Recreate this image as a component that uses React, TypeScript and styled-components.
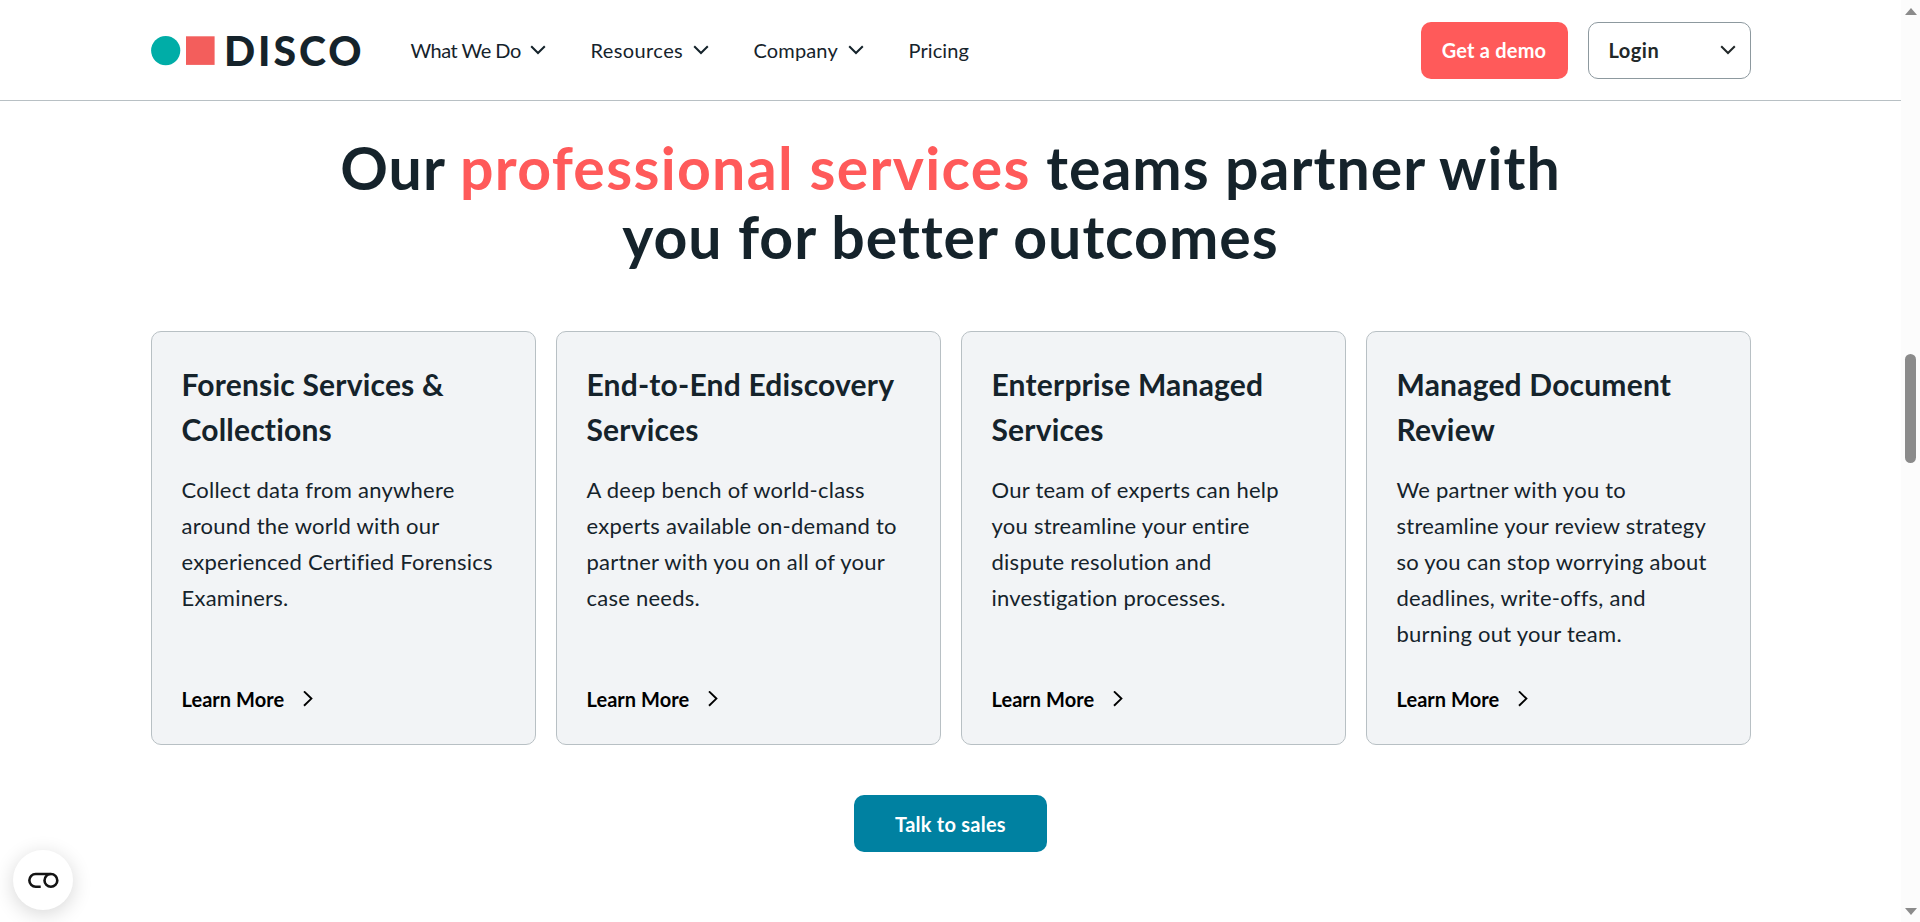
import type { FC } from 'react'
import styled, { createGlobalStyle } from 'styled-components'

const menu = [
	{ label: 'What We Do', dropdown: true, width: 109, spacing: -0.5 },
	{ label: 'Resources', dropdown: true, width: 92, spacing: 0.4 },
	{ label: 'Company', dropdown: true, width: 84, spacing: 0.15 },
	{ label: 'Pricing', dropdown: false, width: 60, spacing: 0.1 },
]

const services = [
	{
		title: 'Forensic Services & Collections',
		text: 'Collect data from anywhere around the world with our experienced Certified Forensics Examiners.',
	},
	{
		title: 'End-to-End Ediscovery Services',
		text: 'A deep bench of world-class experts available on-demand to partner with you on all of your case needs.',
	},
	{
		title: 'Enterprise Managed Services',
		text: 'Our team of experts can help you streamline your entire dispute resolution and investigation processes.',
	},
	{
		title: 'Managed Document Review',
		text: 'We partner with you to streamline your review strategy so you can stop worrying about deadlines, write-offs, and burning out your team.',
	},
]

const ChevronDown: FC = () => (
	<svg width="16" height="10" viewBox="0 0 16 10" fill="none">
		<path d="M1.2 1.2 8 8l6.8-6.8" stroke="currentColor" strokeWidth="2" />
	</svg>
)

const ChevronRight: FC = () => (
	<svg width="10" height="16" viewBox="0 0 10 16" fill="none">
		<path d="M1 .4 8.4 7.6 1 14.8" stroke="currentColor" strokeWidth="1.9" />
	</svg>
)

const Logo: FC = () => (
	<svg width="220" height="48" viewBox="0 0 220 48">
		<circle cx="14.7" cy="24.6" r="14.6" fill="#00ada7" />
		<rect x="35" y="10.3" width="28.6" height="28.6" fill="#f35e5c" />
		<LogoText x="73" y="39.6" textLength="137.5" lengthAdjust="spacing">
			DISCO
		</LogoText>
	</svg>
)

const App: FC = () => {
	return (
		<Window>
			<GlobalStyle />
			<Page>
				<Header>
					<Bar>
						<Logo />
						<Nav>
							{menu.map((item) => (
								<NavItem key={item.label}>
									<NavLabel $width={item.width} $spacing={item.spacing}>
										{item.label}
									</NavLabel>
									{item.dropdown && <ChevronDown />}
								</NavItem>
							))}
						</Nav>
						<Actions>
							<DemoButton>Get a demo</DemoButton>
							<LoginButton>
								Login
								<ChevronDown />
							</LoginButton>
						</Actions>
					</Bar>
				</Header>
				<Section>
					<Title>
						Our <Accent>professional services</Accent> teams partner with
						<br />
						you for better outcomes
					</Title>
					<Cards>
						{services.map((service) => (
							<Card key={service.title}>
								<CardTitle>{service.title}</CardTitle>
								<CardText>{service.text}</CardText>
								<LearnMore>
									Learn More
									<ChevronRight />
								</LearnMore>
							</Card>
						))}
					</Cards>
					<SalesButton>Talk to sales</SalesButton>
				</Section>
			</Page>
			<Scrollbar>
				<Arrow $up />
				<Thumb />
				<Arrow />
			</Scrollbar>
			<CookieButton aria-label="Cookie settings">
				<svg width="32" height="17" viewBox="0 0 32 17" fill="none" stroke="#141414" strokeWidth="2.6">
					<path d="M13.7 14.7H8.7a6.3 6.3 0 0 1 0-12.7H23.5" />
					<circle cx="23.9" cy="8.4" r="6.4" />
				</svg>
			</CookieButton>
		</Window>
	)
}

const GlobalStyle = createGlobalStyle`
	* {
		box-sizing: border-box;
	}

	body {
		margin: 0;
		background-color: #fff;
		font-family: Lato, 'Liberation Sans', sans-serif;
		color: #15232b;
	}

	button {
		font-family: inherit;
		cursor: pointer;
	}

	svg {
		flex: none;
	}
`

const Window = styled.div`
	display: grid;
	grid-template-columns: 1fr 19px;
	height: 100vh;
	overflow: hidden;
`

const Page = styled.div`
	min-width: 0;
`

const Header = styled.header`
	height: 101px;
	border-bottom: 1px solid #b8c0c4;
`

const Bar = styled.div`
	display: flex;
	align-items: center;
	width: 1600px;
	height: 100%;
	margin: 0 auto;
`

const LogoText = styled.text`
	font-family: Lato, sans-serif;
	font-size: 41px;
	font-weight: 900;
	fill: #15232b;
`

const Nav = styled.nav`
	display: flex;
	gap: 45px;
	margin-left: 40px;
`

const NavItem = styled.a`
	display: flex;
	align-items: center;
	gap: 10px;
	font-size: 20px;
	line-height: 30px;
`

const NavLabel = styled.span<{ $width: number; $spacing: number }>`
	width: ${(props) => props.$width}px;
	letter-spacing: ${(props) => props.$spacing}px;
	white-space: nowrap;
`

const Actions = styled.div`
	display: flex;
	gap: 20px;
	margin-left: auto;
`

const DemoButton = styled.button`
	width: 147px;
	height: 57px;
	padding: 0;
	border: none;
	border-radius: 10px;
	background-color: #ff5a5a;
	color: white;
	font-size: 20px;
	font-weight: 700;
	letter-spacing: 0.2px;
`

const LoginButton = styled.button`
	display: flex;
	align-items: center;
	justify-content: space-between;
	width: 163px;
	height: 57px;
	padding: 0 14px 0 20px;
	border: 1px solid #8d999f;
	border-radius: 10px;
	background-color: white;
	color: #222829;
	font-size: 20px;
	font-weight: 700;
	letter-spacing: 0.5px;
`

const Section = styled.section`
	display: flex;
	flex-direction: column;
	align-items: center;
	width: 1600px;
	margin: 0 auto;
	padding-top: 32px;
`

const Title = styled.h2`
	margin: 0 0 60px;
	font-size: 59px;
	font-weight: 700;
	line-height: 69px;
	letter-spacing: 1px;
	text-align: center;
`

const Accent = styled.span`
	color: #ff5a5a;
	letter-spacing: 1.3px;
`

const Cards = styled.div`
	display: grid;
	grid-template-columns: repeat(4, 1fr);
	gap: 20px;
	width: 100%;
`

const Card = styled.article`
	display: flex;
	flex-direction: column;
	height: 414px;
	padding: 30px;
	border: 1px solid #b8c0c4;
	border-radius: 10px;
	background-color: #f2f4f6;
`

const CardTitle = styled.h3`
	margin: 0 0 20px;
	font-size: 30px;
	font-weight: 700;
	line-height: 45px;
	letter-spacing: 0.2px;
`

const CardText = styled.p`
	margin: 0;
	font-size: 22px;
	line-height: 36px;
	letter-spacing: 0.25px;
`

const LearnMore = styled.a`
	display: flex;
	align-items: center;
	gap: 19px;
	margin-top: auto;
	color: black;
	font-size: 20px;
	font-weight: 700;
	line-height: 30px;
	letter-spacing: 0.05px;
`

const SalesButton = styled.button`
	width: 193px;
	height: 57px;
	margin-top: 50px;
	border: none;
	border-radius: 10px;
	background-color: #0081a1;
	color: white;
	font-size: 20px;
	font-weight: 700;
	letter-spacing: 0.25px;
`

const Scrollbar = styled.div`
	display: flex;
	flex-direction: column;
	align-items: center;
	padding: 8px 0 7px;
	background-color: #fcfcfc;
`

const Arrow = styled.i<{ $up?: boolean }>`
	border: 6.5px solid transparent;
	border-${(props) => (props.$up ? 'top' : 'bottom')}: none;
	border-${(props) => (props.$up ? 'bottom' : 'top')}: 7px solid #8b8b8b;
`

const Thumb = styled.div`
	width: 11px;
	height: 109px;
	margin: 339px 0 auto;
	border-radius: 6px;
	background-color: #8b8b8b;
`

const CookieButton = styled.button`
	position: fixed;
	left: 13px;
	bottom: 12px;
	display: flex;
	align-items: center;
	justify-content: center;
	width: 60px;
	height: 60px;
	padding: 0;
	border: none;
	border-radius: 50%;
	background-color: white;
	box-shadow: 0 4px 20px rgba(0, 0, 0, 0.16);
`

export default App
